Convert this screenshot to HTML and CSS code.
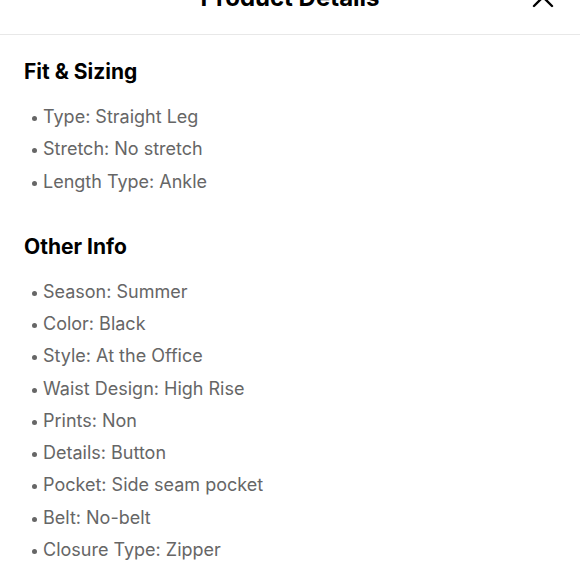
FILE: index.html
```html
<!DOCTYPE html>
<html>
<head>
<meta charset="utf-8">
<link rel="stylesheet" href="styles.css">
</head>
<body>
<div class="sheet">
  <header class="header">
    <h1 class="title">Product Details</h1>
    <button class="close" aria-label="Close">
      <svg width="22" height="22" viewBox="0 0 22 22"><path d="M2 2 L20 20 M20 2 L2 20" stroke="#000" stroke-width="2.4" stroke-linecap="round" fill="none"/></svg>
    </button>
  </header>
  <section class="group">
    <h2 class="group-title">Fit &amp; Sizing</h2>
    <ul class="list">
      <li>Type: Straight Leg</li>
      <li>Stretch: No stretch</li>
      <li>Length Type: Ankle</li>
    </ul>
  </section>
  <section class="group">
    <h2 class="group-title">Other Info</h2>
    <ul class="list">
      <li>Season: Summer</li>
      <li>Color: Black</li>
      <li>Style: At the Office</li>
      <li>Waist Design: High Rise</li>
      <li>Prints: Non</li>
      <li>Details: Button</li>
      <li>Pocket: Side seam pocket</li>
      <li>Belt: No-belt</li>
      <li>Closure Type: Zipper</li>
    </ul>
  </section>
</div>
</body>
</html>
```
FILE: styles.css
```css
html, body {
  margin: 0;
  padding: 0;
  background: #fff;
}
body {
  font-family: Inter, "Noto Sans", sans-serif;
  overflow: hidden;
}
.sheet {
  width: 580px;
}
.header {
  position: relative;
  height: 72px;
  margin-top: -38px;
  border-bottom: 1px solid #e8e8e8;
  display: flex;
  align-items: center;
  justify-content: center;
}
.title {
  margin: 0;
  font-size: 24px;
  font-weight: 700;
  color: #000;
  line-height: 24px;
}
.close {
  position: absolute;
  right: 26px;
  top: 24px;
  border: 0;
  background: none;
  padding: 0;
  width: 22px;
  height: 22px;
}
.close svg { display: block; }
.group {
  padding: 0 24px;
}
.group-title {
  margin: 0;
  font-size: 21px;
  font-weight: 700;
  color: #000;
  line-height: 24px;
  padding-top: 25px;
}
.list {
  list-style: none;
  margin: 0;
  padding: 17px 0 12px 0;
}
.list li {
  position: relative;
  font-size: 18px;
  line-height: 32.25px;
  color: #666;
  padding-left: 19px;
}
.list li::before {
  content: "";
  position: absolute;
  left: 8px;
  top: 15px;
  width: 5px;
  height: 5px;
  border-radius: 50%;
  background: #666;
}
```
